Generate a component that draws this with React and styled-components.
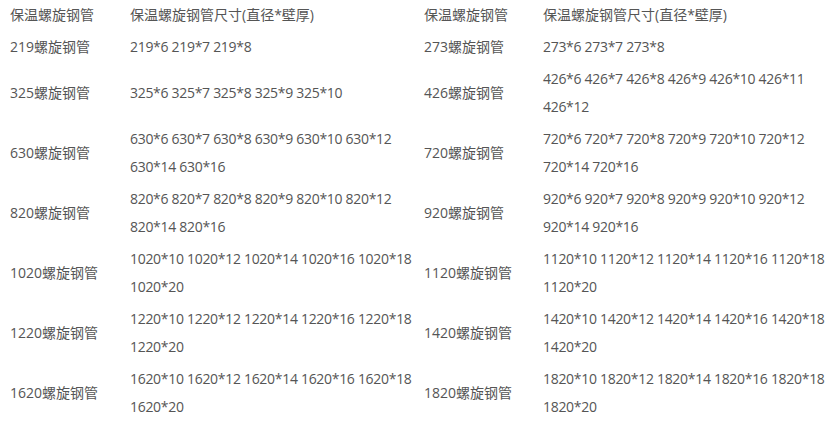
import styled, { createGlobalStyle } from 'styled-components';

const Global = createGlobalStyle`
  body {
    margin: 0;
    background: #fff;
  }
`;

const Table = styled.table`
  border-collapse: collapse;
  table-layout: fixed;
  width: 838px;
  margin-top: -1px;
  font-family: "Open Sans", "Noto Sans CJK SC", sans-serif;
  font-size: 14px;
  color: #555;
`;

const Col = styled.col`
  width: ${p => p.$w}px;
`;

const Cell = styled.td`
  padding: 2px 0 2px 10px;
  line-height: 28px;
  vertical-align: middle;
  letter-spacing: ${p => (p.$sizes ? '-0.3px' : '0')};
`;

const rows = [
  ['保温螺旋钢管', '保温螺旋钢管尺寸(直径*壁厚)', '保温螺旋钢管', '保温螺旋钢管尺寸(直径*壁厚)'],
  ['219螺旋钢管', '219*6 219*7 219*8', '273螺旋钢管', '273*6 273*7 273*8'],
  ['325螺旋钢管', '325*6 325*7 325*8 325*9 325*10', '426螺旋钢管', '426*6 426*7 426*8 426*9 426*10 426*11 426*12'],
  ['630螺旋钢管', '630*6 630*7 630*8 630*9 630*10 630*12 630*14 630*16', '720螺旋钢管', '720*6 720*7 720*8 720*9 720*10 720*12 720*14 720*16'],
  ['820螺旋钢管', '820*6 820*7 820*8 820*9 820*10 820*12 820*14 820*16', '920螺旋钢管', '920*6 920*7 920*8 920*9 920*10 920*12 920*14 920*16'],
  ['1020螺旋钢管', '1020*10 1020*12 1020*14 1020*16 1020*18 1020*20', '1120螺旋钢管', '1120*10 1120*12 1120*14 1120*16 1120*18 1120*20'],
  ['1220螺旋钢管', '1220*10 1220*12 1220*14 1220*16 1220*18 1220*20', '1420螺旋钢管', '1420*10 1420*12 1420*14 1420*16 1420*18 1420*20'],
  ['1620螺旋钢管', '1620*10 1620*12 1620*14 1620*16 1620*18 1620*20', '1820螺旋钢管', '1820*10 1820*12 1820*14 1820*16 1820*18 1820*20'],
];

export default function App() {
  return (
    <>
      <Global />
      <Table>
        <colgroup>
          <Col $w={120} />
          <Col $w={294} />
          <Col $w={119} />
          <Col $w={305} />
        </colgroup>
        <tbody>
          {rows.map((r, i) => (
            <tr key={i}>
              {r.map((c, j) => (
                <Cell key={j} $sizes={i > 0 && j % 2 === 1}>{c}</Cell>
              ))}
            </tr>
          ))}
        </tbody>
      </Table>
    </>
  );
}
